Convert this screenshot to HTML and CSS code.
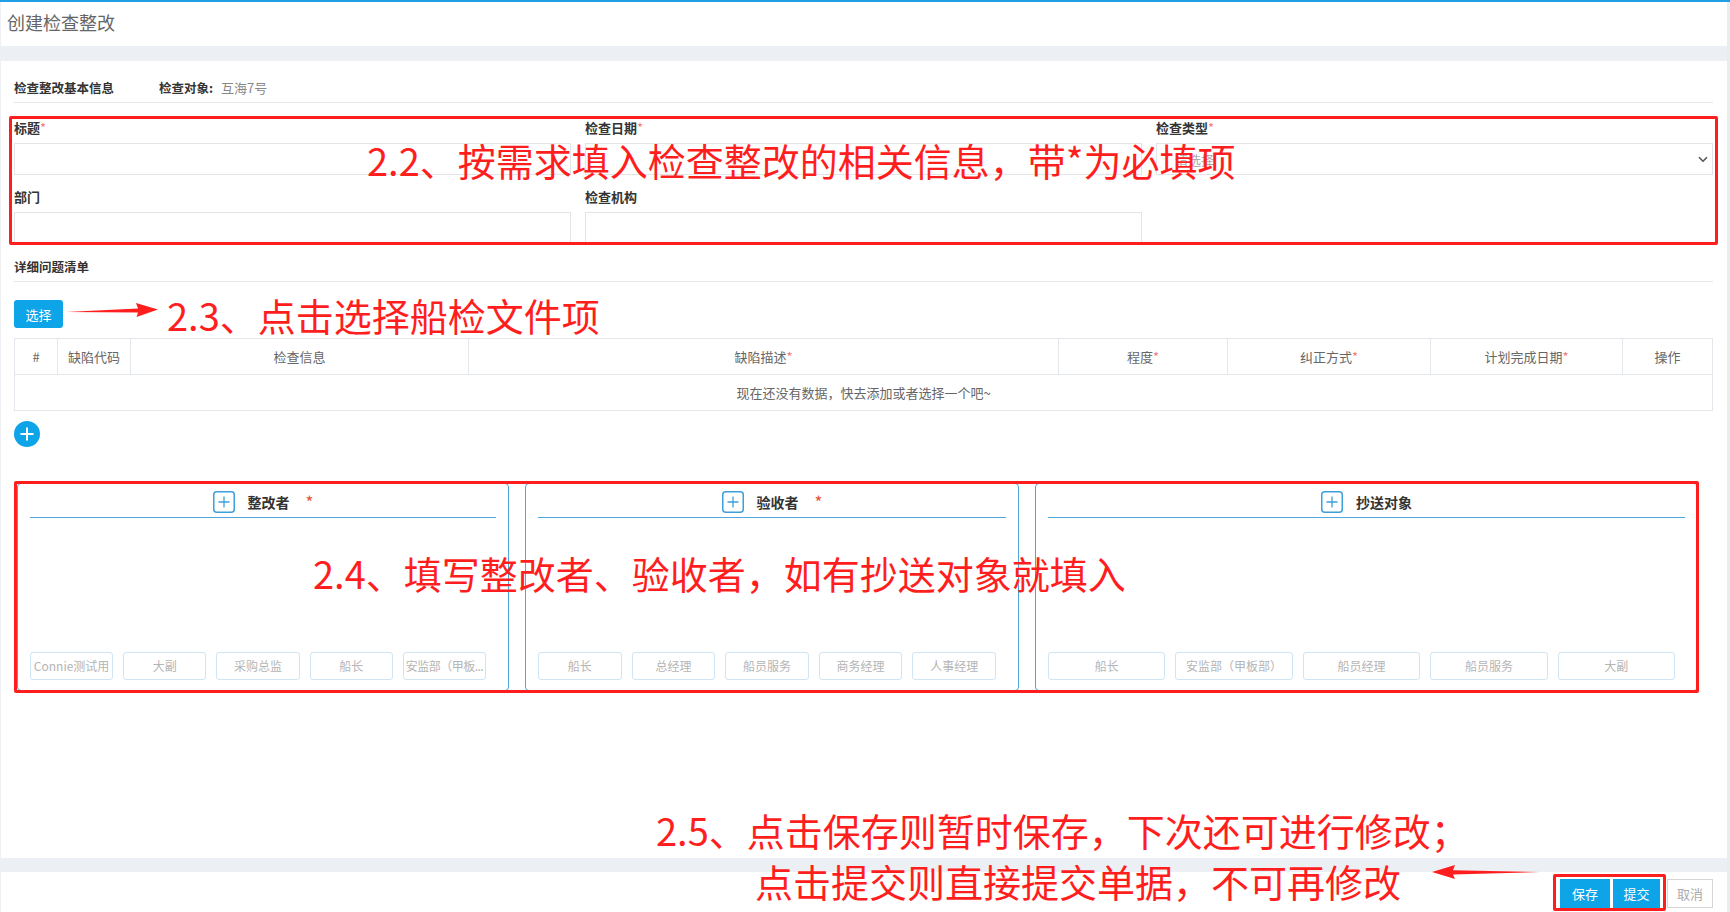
FILE: index.html
```html
<!DOCTYPE html>
<html lang="zh-CN">
<head>
<meta charset="utf-8">
<title>创建检查整改</title>
<link rel="stylesheet" href="styles.css">
</head>
<body>
<div class="screen">
  <div class="app">
    <header class="page-header">创建检查整改</header>
    <div class="band"></div>
    <main class="content">
      <div class="section-head">
        <span class="sec-title">检查整改基本信息</span>
        <span class="sec-title obj">检查对象:</span>
        <span class="obj-val">互海7号</span>
      </div>
      <div class="form-grid">
        <div class="field"><label>标题<i>*</i></label><div class="input"></div></div>
        <div class="field"><label>检查日期<i>*</i></label><div class="input"></div></div>
        <div class="field"><label>检查类型<i>*</i></label>
          <div class="input select"><span class="ph">请选择</span>
            <svg class="chev" width="10" height="7" viewBox="0 0 10 7"><path d="M1 1.2l4 4 4-4" fill="none" stroke="#555" stroke-width="1.6"/></svg>
          </div>
        </div>
        <div class="field"><label>部门</label><div class="input"></div></div>
        <div class="field"><label>检查机构</label><div class="input"></div></div>
      </div>
      <div class="section-head second"><span class="sec-title">详细问题清单</span></div>
      <button class="btn-primary select-btn">选择</button>
      <table class="issues">
        <colgroup>
          <col class="w-idx"><col class="w-code"><col class="w-info"><col class="w-desc">
          <col class="w-level"><col class="w-fix"><col class="w-date"><col class="w-op">
        </colgroup>
        <thead>
          <tr><th>#</th><th>缺陷代码</th><th>检查信息</th><th>缺陷描述<i>*</i></th><th>程度<i>*</i></th><th>纠正方式<i>*</i></th><th>计划完成日期<i>*</i></th><th>操作</th></tr>
        </thead>
        <tbody>
          <tr><td colspan="8" class="empty">现在还没有数据，快去添加或者选择一个吧~</td></tr>
        </tbody>
      </table>
      <div class="add-circle">
        <svg width="26" height="26" viewBox="0 0 26 26"><circle cx="13" cy="13" r="13" fill="#0ea4e8"/><path d="M13 6.5v13M6.5 13h13" stroke="#fff" stroke-width="2"/></svg>
      </div>
      <div class="cards">
        <section class="card">
          <div class="card-head">
            <svg class="plus-sq" width="22" height="22" viewBox="0 0 22 22"><rect x="0.75" y="0.75" width="20.5" height="20.5" rx="3" fill="none" stroke="#3d9fdb" stroke-width="1.5"/><path d="M11 5.5v11M5.5 11h11" stroke="#3d9fdb" stroke-width="1.3"/></svg>
            <span class="card-title">整改者</span><span class="req">*</span>
          </div>
          <div class="tags">
            <span class="tag">Connie测试用</span><span class="tag">大副</span><span class="tag">采购总监</span><span class="tag">船长</span><span class="tag tight">安监部（甲板...</span>
          </div>
        </section>
        <section class="card">
          <div class="card-head">
            <svg class="plus-sq" width="22" height="22" viewBox="0 0 22 22"><rect x="0.75" y="0.75" width="20.5" height="20.5" rx="3" fill="none" stroke="#3d9fdb" stroke-width="1.5"/><path d="M11 5.5v11M5.5 11h11" stroke="#3d9fdb" stroke-width="1.3"/></svg>
            <span class="card-title">验收者</span><span class="req">*</span>
          </div>
          <div class="tags">
            <span class="tag">船长</span><span class="tag">总经理</span><span class="tag">船员服务</span><span class="tag">商务经理</span><span class="tag">人事经理</span>
          </div>
        </section>
        <section class="card">
          <div class="card-head">
            <svg class="plus-sq" width="22" height="22" viewBox="0 0 22 22"><rect x="0.75" y="0.75" width="20.5" height="20.5" rx="3" fill="none" stroke="#3d9fdb" stroke-width="1.5"/><path d="M11 5.5v11M5.5 11h11" stroke="#3d9fdb" stroke-width="1.3"/></svg>
            <span class="card-title">抄送对象</span>
          </div>
          <div class="tags">
            <span class="tag">船长</span><span class="tag">安监部（甲板部）</span><span class="tag">船员经理</span><span class="tag">船员服务</span><span class="tag">大副</span>
          </div>
        </section>
      </div>
    </main>
    <div class="band footer-band"></div>
    <footer class="footer">
      <button class="btn-primary save">保存</button>
      <button class="btn-primary submit">提交</button>
      <button class="btn-cancel">取消</button>
    </footer>
  </div>
  <div class="strip"></div>
</div>

<div class="annot box box-form"></div>
<div class="annot note note-22">2.2、按需求填入检查整改的相关信息，带*为必填项</div>
<svg class="annot arrow arrow-select" width="96" height="20" viewBox="0 0 96 20"><polygon points="2,12 74,8.6 72,3 94,9.5 72.5,17 74,12.6" fill="#ff1e1e"/></svg>
<div class="annot note note-23">2.3、点击选择船检文件项</div>
<div class="annot box box-cards"></div>
<div class="annot note note-24">2.4、填写整改者、验收者，如有抄送对象就填入</div>
<div class="annot note note-25a">2.5、点击保存则暂时保存，下次还可进行修改；</div>
<div class="annot note note-25b">点击提交则直接提交单据，不可再修改</div>
<svg class="annot arrow arrow-footer" width="112" height="20" viewBox="0 0 112 20"><polygon points="2,10 25,3 23,8.2 110,10 23,12.4 25,17" fill="#ff1e1e"/></svg>
<div class="annot box box-buttons"></div>
</body>
</html>
```

FILE: styles.css
```css
* { box-sizing: border-box; margin: 0; padding: 0; }
html, body { width: 1730px; height: 912px; overflow: hidden; }
body {
  position: relative;
  font-family: "Noto Sans CJK SC", "Noto Sans", sans-serif;
  color: #333;
  background: #fff;
}

.screen {
  display: flex;
  height: 912px;
  border-top: 2px solid #1f9fe6;
}
.app {
  flex: 1;
  display: flex;
  flex-direction: column;
  border-left: 1px solid #eef0f3;
}
.strip { width: 4px; background: #e9ecf0; }

.page-header {
  height: 44px;
  line-height: 40px;
  padding-left: 6px;
  font-size: 18px;
  color: #666;
  flex: none;
}
.band { height: 15px; background: #eceff3; flex: none; }
.footer-band { height: 14px; }

.content { flex: 1; padding: 0 14px 0 13px; }

.section-head {
  display: flex;
  align-items: center;
  padding-top: 18px;
  padding-bottom: 5px;
  line-height: 18px;
  border-bottom: 1px solid #e4e6ea;
}
.section-head.second { padding-top: 14px; }
.sec-title { font-size: 12.5px; font-weight: 700; color: #333; }
.sec-title.obj { margin-left: 45px; }
.obj-val { font-size: 13px; color: #888; margin-left: 8px; }

.form-grid {
  display: grid;
  grid-template-columns: repeat(3, 1fr);
  column-gap: 14px;
  row-gap: 13px;
  margin-top: 16px;
}
.field label {
  display: block;
  font-size: 13px;
  font-weight: 700;
  line-height: 18px;
  color: #333;
  margin-bottom: 6px;
}
.field label i, th i { font-style: normal; color: #f47c7c; font-weight: 400; }
.input { height: 32px; border: 1px solid #e2e4e8; background: #fff; }
.input.select { display: flex; align-items: center; justify-content: space-between; padding: 0 4px 0 18px; }
.ph { font-size: 13px; color: #aaa; }

.btn-primary {
  border: none;
  background: #0ea4e8;
  color: #fff;
  font-family: inherit;
  font-size: 13px;
  border-radius: 3px;
}
.select-btn { display: block; width: 49px; height: 28px; margin-top: 18px; }

.issues {
  width: 1698px;
  table-layout: fixed;
  border-collapse: collapse;
  margin-top: 10px;
}
.w-idx { width: 43px; }
.w-code { width: 73px; }
.w-info { width: 338px; }
.w-desc { width: 590px; }
.w-level { width: 169px; }
.w-fix { width: 203px; }
.w-date { width: 192px; }
.w-op { width: 90px; }
.issues th, .issues td {
  border: 1px solid #e3e6ea;
  font-size: 13px;
  font-weight: 400;
  color: #666;
  text-align: center;
}
.issues th { height: 36px; }
.issues td { height: 36px; }

.add-circle { width: 26px; height: 26px; margin-top: 10px; }
.add-circle svg { display: block; }

.cards {
  display: grid;
  grid-template-columns: 492px 494px 1fr;
  column-gap: 16px;
  margin: 36px 15px 0 3px;
}
.card {
  height: 208px;
  border: 1px solid #4ea6dc;
  border-radius: 4px;
  display: flex;
  flex-direction: column;
  justify-content: space-between;
}
.card-head {
  margin: 0 12px;
  padding: 7px 0 4px;
  border-bottom: 1px solid #4ea6dc;
  display: flex;
  align-items: center;
  justify-content: center;
}
.plus-sq { display: block; }
.card-title { font-size: 14px; font-weight: 700; color: #333; margin-left: 13px; line-height: 22px; }
.req { color: #e8543c; font-size: 17px; line-height: 22px; margin-left: 16px; }
.tags {
  display: flex;
  gap: 10px;
  padding: 0 22px 10px 12px;
}
.tag {
  flex: 1;
  min-width: 0;
  height: 28px;
  line-height: 26px;
  border: 1px solid #cfe5f3;
  border-radius: 3px;
  font-size: 12px;
  color: #b5b5b5;
  text-align: center;
  white-space: nowrap;
  overflow: hidden;
  text-overflow: clip;
  padding: 0;
}
.tag.tight { letter-spacing: -0.5px; }

.footer {
  height: 40px;
  flex: none;
  display: flex;
  justify-content: flex-end;
  align-items: flex-start;
  padding: 7px 14px 0 0;
}
.footer button { height: 29px; }
.save { width: 50px; border-radius: 0; }
.submit { width: 47px; margin-left: 3px; border-radius: 0; }
.btn-cancel {
  width: 46px;
  margin-left: 7px;
  background: #fff;
  border: 1px solid #d6d6d6;
  color: #aaa;
  font-family: inherit;
  font-size: 13px;
}

/* annotation overlays */
.annot { position: absolute; }
.box { border: 3px solid #ff1e1e; border-radius: 2px; }
.box-form { left: 9px; top: 116px; width: 1709px; height: 129px; }
.box-cards { left: 14px; top: 481px; width: 1685px; height: 212px; }
.box-buttons { left: 1553px; top: 874px; width: 113px; height: 37px; }
.note {
  color: #ff1e1e;
  font-size: 38px;
  line-height: 38px;
  white-space: nowrap;
}
.note-22 { left: 367px; top: 141px; }
.note-23 { left: 167px; top: 296px; }
.note-24 { left: 313px; top: 554px; }
.note-25a { left: 656px; top: 811px; }
.note-25b { left: 755px; top: 862px; }
.arrow-select { left: 64px; top: 300px; }
.arrow-footer { left: 1430px; top: 862px; }
```
